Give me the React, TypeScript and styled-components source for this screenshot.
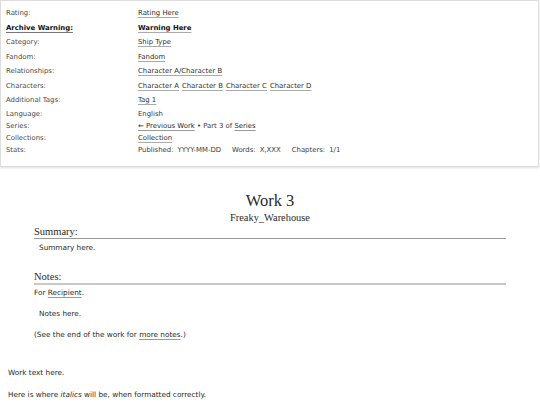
import React from 'react'
import styled, { createGlobalStyle } from 'styled-components'

const GlobalStyle = createGlobalStyle`
  html, body {
    margin: 0;
    padding: 0;
    background: #fff;
  }
  body {
    font-family: 'DejaVu Sans', Verdana, sans-serif;
    color: #2a2a2a;
  }
`

const Page = styled.div`
  width: 540px;
`

const MetaBox = styled.dl`
  margin: 0;
  width: 539px;
  box-sizing: border-box;
  border: 1px solid #ddd;
  box-shadow: 0 1px 2px #ddd;
  padding: 5px 5px 10px;
  font-size: 6.9px;
`

const MetaRow = styled.div<{ $tall?: boolean }>`
  display: grid;
  grid-template-columns: 132px 1fr;
  align-items: center;
  height: ${p => (p.$tall ? '14.5px' : '12px')};
`

const Label = styled.dt<{ $strong?: boolean }>`
  margin: 0;
  color: ${p => (p.$strong ? '#111' : '#4a4a4a')};
  font-weight: ${p => (p.$strong ? 'bold' : 'normal')};
  text-decoration: ${p => (p.$strong ? 'underline' : 'none')};
  text-decoration-color: #777;
  text-underline-offset: 1.5px;
`

const Value = styled.dd<{ $strong?: boolean }>`
  margin: 0;
  color: #3a3a3a;
  font-weight: ${p => (p.$strong ? 'bold' : 'normal')};
  white-space: nowrap;
`

const Tag = styled.a<{ $strong?: boolean }>`
  color: ${p => (p.$strong ? '#111' : '#2f2f2f')};
  text-decoration: underline;
  text-decoration-color: #aaa;
  text-underline-offset: 1.5px;

  & + & {
    margin-left: 3px;
  }
`

const Stat = styled.span`
  margin-right: 11px;
  & > b {
    font-weight: normal;
    margin-right: 4px;
  }
`

const Preface = styled.div`
  margin: 23px 34px 0;
  color: #2a2a2a;
`

const Title = styled.h2`
  margin: 0;
  font-family: 'Liberation Serif', Georgia, serif;
  font-weight: normal;
  font-size: 16.5px;
  line-height: 21px;
  text-align: center;
`

const Byline = styled.h3`
  margin: 0;
  font-family: 'Liberation Serif', Georgia, serif;
  font-weight: normal;
  font-size: 10.4px;
  line-height: 14px;
  text-align: center;
`

const SectionHead = styled.h3<{ $thick?: boolean }>`
  margin: ${p => (p.$thick ? '16px' : '0')} 0 0;
  font-family: 'Liberation Serif', Georgia, serif;
  font-weight: normal;
  font-size: 10.5px;
  line-height: 13px;
  border-bottom: ${p => (p.$thick ? '2px solid #c8c8c8' : '1px solid #999')};
`

const Para = styled.p<{ $indent?: boolean; $gap?: number }>`
  margin: ${p => p.$gap ?? 0}px 0 0 ${p => (p.$indent ? '5px' : '0')};
  font-size: 7.3px;
  line-height: 12px;
`

const Link = styled.a`
  color: #2a2a2a;
  text-decoration: underline;
  text-decoration-color: #999;
  text-underline-offset: 1.5px;
`

const WorkText = styled.div`
  margin: 26px 8px 0;
  color: #2a2a2a;
`

type Row = {
  label: string
  values?: string[]
  strong?: boolean
  tall?: boolean
  content?: React.ReactNode
}

const rows: Row[] = [
  { label: 'Rating:', values: ['Rating Here'], tall: true },
  { label: 'Archive Warning:', values: ['Warning Here'], strong: true, tall: true },
  { label: 'Category:', values: ['Ship Type'], tall: true },
  { label: 'Fandom:', values: ['Fandom'], tall: true },
  { label: 'Relationships:', values: ['Character A/Character B'], tall: true },
  {
    label: 'Characters:',
    values: ['Character A', 'Character B', 'Character C', 'Character D'],
    tall: true,
  },
  { label: 'Additional Tags:', values: ['Tag 1'], tall: true },
  { label: 'Language:', content: 'English' },
  {
    label: 'Series:',
    content: (
      <>
        <Link>← Previous Work</Link> • Part 3 of <Link>Series</Link>
      </>
    ),
  },
  { label: 'Collections:', values: ['Collection'] },
  {
    label: 'Stats:',
    content: (
      <>
        <Stat>
          <b>Published:</b>YYYY-MM-DD
        </Stat>
        <Stat>
          <b>Words:</b>X,XXX
        </Stat>
        <Stat>
          <b>Chapters:</b>1/1
        </Stat>
      </>
    ),
  },
]

export default function App() {
  return (
    <Page>
      <GlobalStyle />
      <MetaBox>
        {rows.map(r => (
          <MetaRow key={r.label} $tall={r.tall}>
            <Label $strong={r.strong}>{r.label}</Label>
            <Value $strong={r.strong}>
              {r.values
                ? r.values.map(v => (
                    <Tag key={v} $strong={r.strong}>
                      {v}
                    </Tag>
                  ))
                : r.content}
            </Value>
          </MetaRow>
        ))}
      </MetaBox>

      <Preface>
        <Title>Work 3</Title>
        <Byline>Freaky_Warehouse</Byline>
        <SectionHead>Summary:</SectionHead>
        <Para $indent $gap={3}>
          Summary here.
        </Para>
        <SectionHead $thick>Notes:</SectionHead>
        <Para $gap={2}>
          For <Link>Recipient</Link>.
        </Para>
        <Para $indent $gap={9}>
          Notes here.
        </Para>
        <Para $gap={9}>
          (See the end of the work for <Link>more notes</Link>.)
        </Para>
      </Preface>

      <WorkText>
        <Para>Work text here.</Para>
        <Para $gap={10}>
          Here is where <i>italics</i> will be, when formatted correctly.
        </Para>
      </WorkText>
    </Page>
  )
}
